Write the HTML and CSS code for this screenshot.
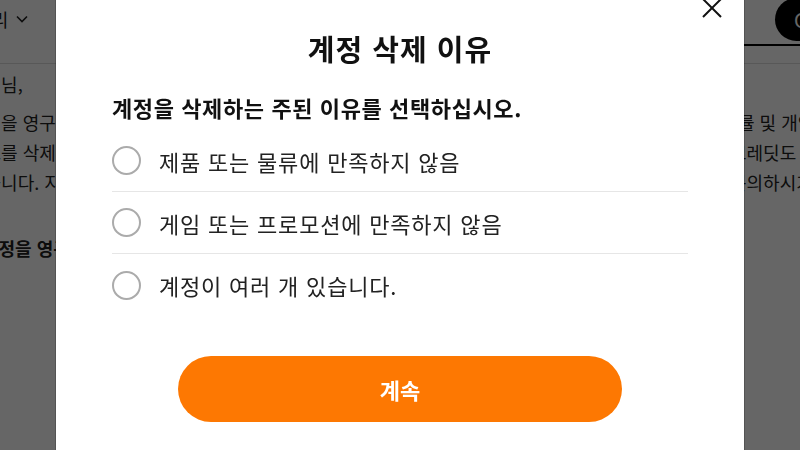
FILE: index.html
```html
<!DOCTYPE html>
<html lang="ko">
<head>
<meta charset="utf-8">
<title>계정 삭제 이유</title>
<link rel="stylesheet" href="styles.css">
</head>
<body>
  <div class="page">
    <header class="topbar">
      <div class="menu">
        <span>카테고리</span>
        <svg class="chev" viewBox="0 0 12 8"><polyline points="1,1.5 6,6.5 11,1.5" fill="none" stroke="#222" stroke-width="1.6"/></svg>
      </div>
      <div class="account"><span class="pill">Chat</span></div>
    </header>
    <div class="subbar"></div>
    <main class="content">
      <div class="para first">
        <div class="line"><span>고객님,</span><span></span></div>
      </div>
      <div class="para">
        <div class="line"><span>계정을 영구적으로 삭제하시면 모든 주문 내역</span><span class="shift">률 및 개인정보</span></div>
        <div class="line"><span>정보를 삭제하며 복구할 수 없습니다</span><span>크레딧도 함께</span></div>
        <div class="line"><span>있습니다. 지금 삭제하시기 전에</span><span>문의하시기</span></div>
      </div>
      <div class="para strong">
        <div class="line"><span class="indent">계정을 영구적으로 삭제하시겠습니까?</span><span></span></div>
      </div>
    </main>
  </div>

  <div class="overlay"></div>

  <div class="modal" role="dialog" aria-labelledby="modal-title">
    <button class="close" aria-label="닫기">
      <svg viewBox="0 0 20 20"><path d="M1 1 L19 19 M19 1 L1 19" stroke="#111" stroke-width="2" fill="none"/></svg>
    </button>
    <h1 class="title" id="modal-title">계정 삭제 이유</h1>
    <p class="lead">계정을 삭제하는 주된 이유를 선택하십시오.</p>
    <ul class="options">
      <li class="option"><span class="radio"></span><span class="option-text">제품 또는 물류에 만족하지 않음</span></li>
      <li class="option"><span class="radio"></span><span class="option-text">게임 또는 프로모션에 만족하지 않음</span></li>
      <li class="option"><span class="radio"></span><span class="option-text">계정이 여러 개 있습니다.</span></li>
    </ul>
    <button class="cta">계속</button>
  </div>
</body>
</html>
```

FILE: styles.css
```css
* { box-sizing: border-box; }

html, body {
  margin: 0;
  padding: 0;
}

body {
  width: 800px;
  height: 450px;
  overflow: hidden;
  background: #fff;
  color: #1a1a1a;
  font-family: "Noto Sans CJK KR", "Noto Sans", sans-serif;
}

/* ---------- page behind the dialog ---------- */
.topbar {
  display: flex;
  justify-content: space-between;
  height: 46px;
}

.menu {
  display: flex;
  align-items: center;
  gap: 8px;
  margin-left: -58px;
  padding-top: 4px;
  height: 34px;
  font-size: 18px;
  line-height: 30px;
  white-space: nowrap;
}

.chev {
  width: 12px;
  height: 8px;
}

.account {
  display: flex;
  justify-content: flex-end;
  width: 220px;
  height: 46px;
  border-bottom: 2px solid #000;
}

.pill {
  display: flex;
  align-items: center;
  flex: none;
  width: 70px;
  height: 43px;
  margin-top: -2px;
  margin-right: -45px;
  padding-left: 19px;
  border-radius: 22px;
  background: #000;
  color: #fff;
  font-size: 20px;
}

.subbar {
  height: 18px;
  border-bottom: 1px solid #ddd;
}

.content {
  margin-left: -32px;
  font-size: 18px;
  line-height: 30px;
  color: #222;
}

.para.first { margin-top: 5px; }
.para { margin-top: 8px; }
.para.strong { margin-top: 36px; font-weight: 700; }

.line {
  display: grid;
  grid-template-columns: 762px auto;
  white-space: nowrap;
}

.shift { padding-left: 8px; }
.indent { padding-left: 14px; }

/* ---------- overlay + dialog ---------- */
.overlay {
  position: fixed;
  inset: 0;
  background: rgba(0, 0, 0, 0.6);
}

.modal {
  position: fixed;
  left: 56px;
  top: 0;
  width: 688px;
  height: 480px;
  padding: 28px 56px 0;
  background: #fff;
  box-shadow: 0 0 0 1px rgba(0, 0, 0, 0.18);
  display: flex;
  flex-direction: column;
  align-items: center;
}

.close {
  position: absolute;
  top: -2px;
  right: 22px;
  width: 20px;
  height: 20px;
  padding: 0;
  border: none;
  background: none;
}

.close svg {
  display: block;
  width: 20px;
  height: 20px;
}

.title {
  margin: 0;
  font-size: 29px;
  line-height: 40px;
  letter-spacing: 1px;
  font-weight: 700;
  color: #111;
}

.lead {
  align-self: stretch;
  margin: 24px 0 8px;
  font-size: 22px;
  line-height: 30px;
  letter-spacing: 0.6px;
  font-weight: 700;
  color: #111;
}

.options {
  align-self: stretch;
  list-style: none;
  margin: 0;
  padding: 0;
}

.option {
  display: flex;
  align-items: center;
  height: 62px;
  border-bottom: 1px solid #e6e6e6;
}

.option:last-child { border-bottom: none; }

.radio {
  flex: none;
  width: 29px;
  height: 29px;
  margin-right: 18px;
  border: 2px solid #ababab;
  border-radius: 50%;
}

.option-text {
  font-size: 22px;
  line-height: 30px;
  letter-spacing: 0.8px;
  color: #222;
}

.cta {
  margin-top: 40px;
  width: 444px;
  height: 66px;
  border: none;
  border-radius: 33px;
  background: #fd7802;
  color: #fff;
  font-family: inherit;
  font-size: 22px;
  font-weight: 700;
}
```
